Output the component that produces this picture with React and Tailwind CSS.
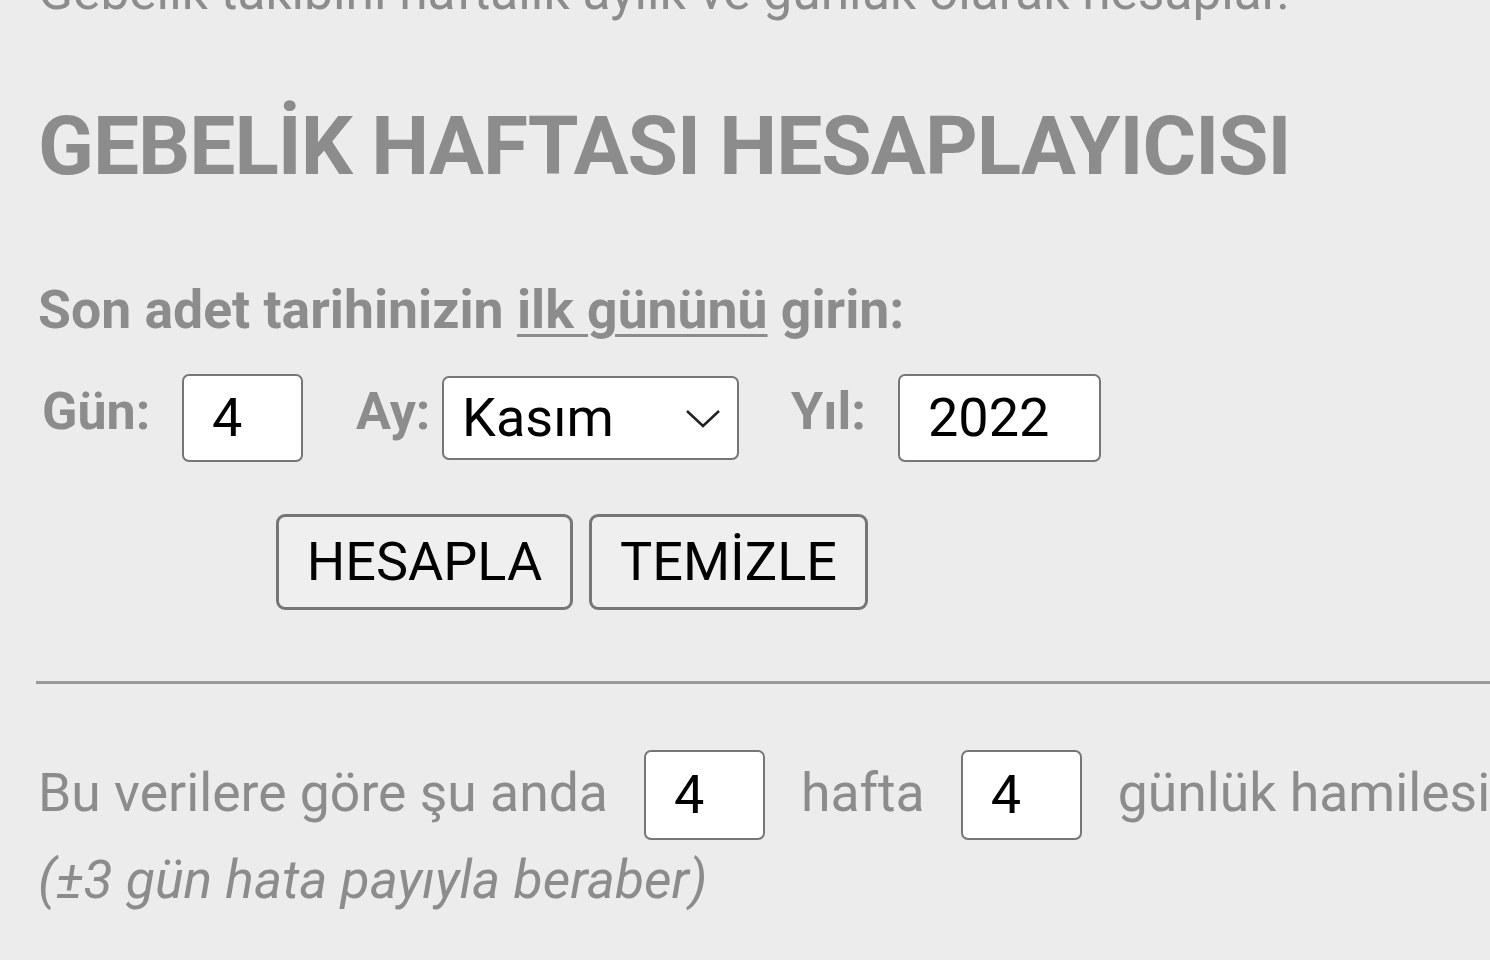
import React from 'react';

const Box = ({ value, w, h = 'h-[88px]', pl = 'pl-[28px]' }) => (
  <div className={`${w} ${h} ${pl} flex items-center bg-white border-2 border-[#767676] rounded-[7px] text-black text-[54px] font-normal leading-none`}>
    {value}
  </div>
);

const App = () => {
  return (
    <div className="w-[1490px] h-[960px] overflow-hidden bg-[#ececec] text-[#8c8c8c] font-['Roboto',sans-serif]">
      {/* Üst açıklama (kırpılmış) */}
      <p className="mt-[-38px] pl-[38px] text-[51.5px] leading-[60px] whitespace-nowrap">
        Gebelik takibini haftalık aylık ve günlük olarak hesaplar.
      </p>

      <h1 className="mt-[83px] pl-[38px] text-[82px] tracking-[-1px] leading-none font-bold whitespace-nowrap">
        GEBELİK HAFTASI HESAPLAYICISI
      </h1>

      <p className="mt-[96px] pl-[38px] text-[53.5px] leading-none font-bold whitespace-nowrap">
        Son adet tarihinizin <span className="underline underline-offset-[6px] decoration-[3px]">ilk gününü</span> girin:
      </p>

      {/* Tarih girişi */}
      <div className="mt-[37px] pl-[42px] flex items-center font-bold text-[52px] leading-none">
        <span className="w-[108px] -mt-[12px]">Gün:</span>
        <div className="ml-[32px]">
          <Box value="4" w="w-[121px]" />
        </div>
        <span className="w-[74px] ml-[53px] -mt-[12px]">Ay:</span>
        <div className="ml-[12px] w-[297px] h-[84px] pl-[18px] pr-[16px] flex items-center justify-between bg-white border-2 border-[#767676] rounded-[7px] text-black text-[54px] font-normal">
          <span>Kasım</span>
          <svg width="36" height="22" viewBox="0 0 36 22" fill="none" stroke="#222" strokeWidth="2.5">
            <path d="M2 4 L18 19 L34 4" />
          </svg>
        </div>
        <span className="w-[75px] ml-[52px] -mt-[12px]">Yıl:</span>
        <div className="ml-[32px]">
          <Box value="2022" w="w-[203px]" />
        </div>
      </div>

      {/* Butonlar */}
      <div className="mt-[52px] pl-[276px] flex gap-[16px]">
        <button className="w-[297px] h-[96px] bg-[#efefef] border-[3px] border-[#767676] rounded-[9px] text-black text-[54px] leading-none">
          HESAPLA
        </button>
        <button className="w-[279px] h-[96px] bg-[#efefef] border-[3px] border-[#767676] rounded-[9px] text-black text-[54px] leading-none">
          TEMİZLE
        </button>
      </div>

      <hr className="mt-[71px] ml-[36px] border-0 h-[3px] bg-[#9a9a9a]" />

      {/* Sonuç */}
      <div className="mt-[66px] pl-[38px] flex items-center text-[53.5px] leading-none whitespace-nowrap">
        <span className="-mt-[4px]">Bu verilere göre şu anda</span>
        <div className="ml-[36px]">
          <Box value="4" w="w-[121px]" h="h-[90px]" />
        </div>
        <span className="ml-[36px] -mt-[4px]">hafta</span>
        <div className="ml-[36px]">
          <Box value="4" w="w-[121px]" h="h-[90px]" />
        </div>
        <span className="ml-[36px] -mt-[4px]">günlük hamilesiniz.</span>
      </div>
      <p className="mt-[10px] pl-[38px] text-[53.5px] leading-[60px] italic whitespace-nowrap">
        (±3 gün hata payıyla beraber)
      </p>
    </div>
  );
};

export default App;
